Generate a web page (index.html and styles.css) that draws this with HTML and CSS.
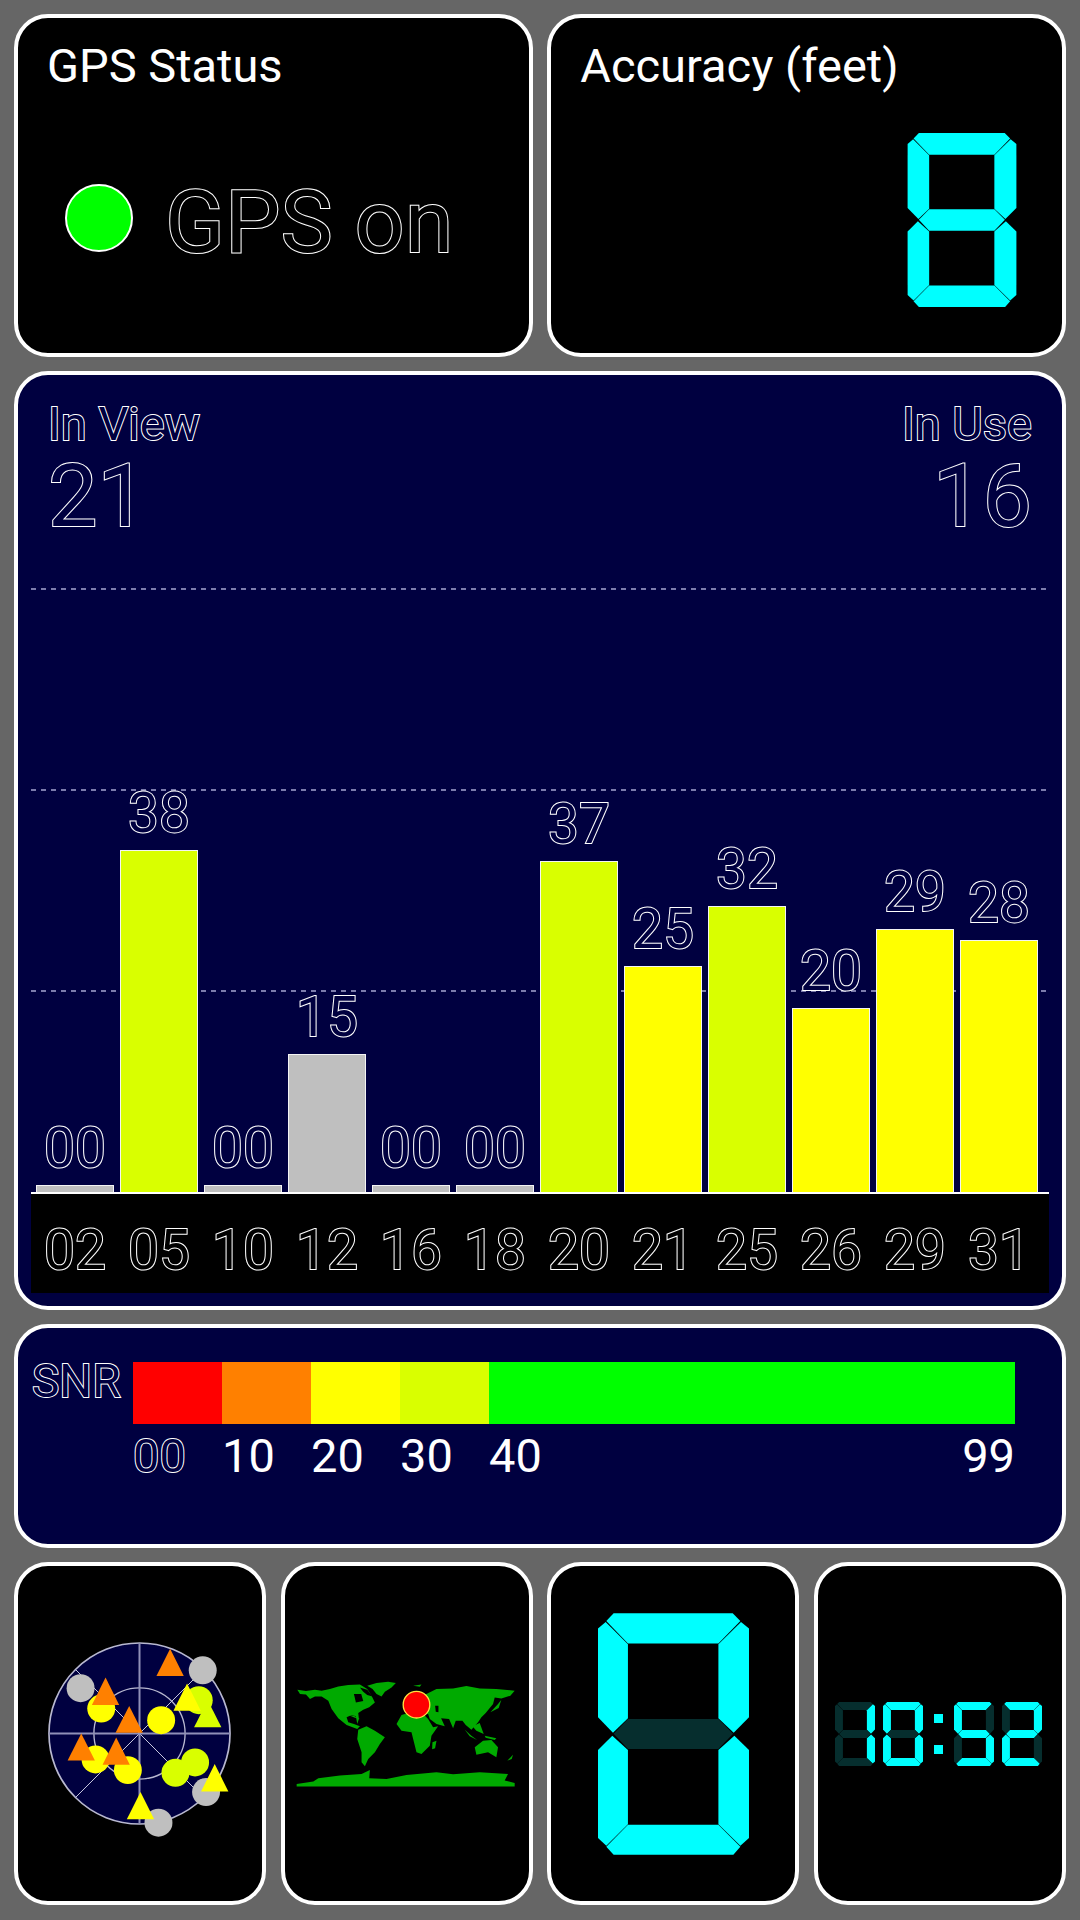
FILE: index.html
```html
<!DOCTYPE html>
<html lang="en">
<head>
    <meta charset="UTF-8">
    <meta name="viewport" content="width=device-width, initial-scale=1.0">
    <title>GPS Status</title>
    <link rel="stylesheet" href="styles.css">
</head>
<body>
    <!-- shared seven segment shapes -->
    <svg class="defs">
        <defs>
            <polygon id="seg-a" points="25,23 47,0 405,0 428,23 362,91 90,91"/>
            <polygon id="seg-f" points="0,46 23,26 90,93 90,316 45,359 0,313"/>
            <polygon id="seg-b" points="454,46 430,26 362,93 362,316 408,359 454,313"/>
            <polygon id="seg-g" points="47,362 90,318 362,318 406,362 362,408 90,408"/>
            <polygon id="seg-e" points="0,411 43,368 90,411 90,634 25,699 0,676"/>
            <polygon id="seg-c" points="454,411 410,368 362,411 362,634 428,699 454,676"/>
            <polygon id="seg-d" points="25,702 90,636 362,636 428,702 407,726 47,726"/>
        </defs>
    </svg>

    <div class="page">
        <div class="row-top">
            <div class="card status-card">
                <div class="title">GPS Status</div>
                <div class="status-row">
                    <span class="status-dot"></span>
                    <span class="outline status-text">GPS on</span>
                </div>
            </div>
            <div class="card accuracy-card">
                <div class="title">Accuracy (feet)</div>
                <svg class="seg accuracy-digit" viewBox="0 0 454 726">
                    <use href="#seg-a"/><use href="#seg-b"/><use href="#seg-c"/><use href="#seg-d"/><use href="#seg-e"/><use href="#seg-f"/><use href="#seg-g"/>
                </svg>
            </div>
        </div>

        <div class="card navy chart-card">
            <div class="chart-head">
                <div>
                    <div class="outline head-label">In View</div>
                    <div class="outline head-num">21</div>
                </div>
                <div class="head-right">
                    <div class="outline head-label">In Use</div>
                    <div class="outline head-num">16</div>
                </div>
            </div>
            <div class="plot">
                <div class="gridlines">
                    <div class="gridline"></div>
                    <div class="gridline"></div>
                    <div class="gridline"></div>
                </div>
                <div class="bars">
                    <div class="bar-col"><div class="outline bar-num">00</div><div class="bar grey" style="height:7px"></div></div>
                    <div class="bar-col"><div class="outline bar-num">38</div><div class="bar lime" style="height:342px"></div></div>
                    <div class="bar-col"><div class="outline bar-num">00</div><div class="bar grey" style="height:7px"></div></div>
                    <div class="bar-col"><div class="outline bar-num">15</div><div class="bar grey" style="height:138px"></div></div>
                    <div class="bar-col"><div class="outline bar-num">00</div><div class="bar grey" style="height:7px"></div></div>
                    <div class="bar-col"><div class="outline bar-num">00</div><div class="bar grey" style="height:7px"></div></div>
                    <div class="bar-col"><div class="outline bar-num">37</div><div class="bar lime" style="height:331px"></div></div>
                    <div class="bar-col"><div class="outline bar-num">25</div><div class="bar yellow" style="height:226px"></div></div>
                    <div class="bar-col"><div class="outline bar-num">32</div><div class="bar lime" style="height:286px"></div></div>
                    <div class="bar-col"><div class="outline bar-num">20</div><div class="bar yellow" style="height:184px"></div></div>
                    <div class="bar-col"><div class="outline bar-num">29</div><div class="bar yellow" style="height:263px"></div></div>
                    <div class="bar-col"><div class="outline bar-num">28</div><div class="bar yellow" style="height:252px"></div></div>
                </div>
            </div>
            <div class="ids">
                <div class="outline id">02</div>
                <div class="outline id">05</div>
                <div class="outline id">10</div>
                <div class="outline id">12</div>
                <div class="outline id">16</div>
                <div class="outline id">18</div>
                <div class="outline id">20</div>
                <div class="outline id">21</div>
                <div class="outline id">25</div>
                <div class="outline id">26</div>
                <div class="outline id">29</div>
                <div class="outline id">31</div>
            </div>
        </div>

        <div class="card navy snr-card">
            <div class="outline snr-label">SNR</div>
            <div class="snr-scale">
                <div class="snr-bar">
                    <div class="snr-step red"></div>
                    <div class="snr-step orange"></div>
                    <div class="snr-step yellow"></div>
                    <div class="snr-step lime"></div>
                    <div class="snr-rest green"></div>
                </div>
                <div class="snr-ticks">
                    <div class="snr-step outline">00</div>
                    <div class="snr-step">10</div>
                    <div class="snr-step">20</div>
                    <div class="snr-step">30</div>
                    <div class="snr-rest">
                        <span>40</span>
                        <span>99</span>
                    </div>
                </div>
            </div>
        </div>

        <div class="row-bottom">
            <div class="card tile">
                <svg class="radar" viewBox="40 80 640 640">
                    <circle class="radar-disc" cx="360" cy="400" r="272"/>
                    <circle class="radar-ring" cx="360" cy="400" r="137"/>
                    <line class="radar-thin" x1="168" y1="208" x2="552" y2="592"/>
                    <line class="radar-thin" x1="552" y1="208" x2="168" y2="592"/>
                    <line class="radar-axis" x1="360" y1="128" x2="360" y2="672"/>
                    <line class="radar-axis" x1="88" y1="400" x2="632" y2="400"/>

                    <circle class="sat-grey" cx="183" cy="264" r="42"/>
                    <circle class="sat-grey" cx="550" cy="210" r="42"/>
                    <circle class="sat-grey" cx="560" cy="576" r="42"/>
                    <circle class="sat-grey" cx="417" cy="668" r="42"/>
                    <circle class="sat-yellow" cx="245" cy="325" r="42"/>
                    <circle class="sat-yellow" cx="425" cy="360" r="42"/>
                    <circle class="sat-yellow" cx="228" cy="478" r="42"/>
                    <circle class="sat-yellow" cx="325" cy="510" r="42"/>
                    <circle class="sat-lime" cx="538" cy="300" r="42"/>
                    <circle class="sat-lime" cx="527" cy="487" r="42"/>
                    <circle class="sat-lime" cx="468" cy="518" r="42"/>

                    <polygon class="sat-lime" points="565,300 606,381 524,381"/>
                    <polygon class="sat-yellow" points="503,250 544,332 462,332"/>
                    <polygon class="sat-yellow" points="363,576 404,658 322,658"/>
                    <polygon class="sat-yellow" points="586,492 627,574 545,574"/>
                    <polygon class="sat-orange" points="452,145 493,227 411,227"/>
                    <polygon class="sat-orange" points="258,232 299,314 217,314"/>
                    <polygon class="sat-orange" points="329,317 370,398 288,398"/>
                    <polygon class="sat-orange" points="185,400 226,481 144,481"/>
                    <polygon class="sat-orange" points="290,412 331,494 249,494"/>
                </svg>
            </div>
            <div class="card tile">
                <svg class="map" viewBox="45 120 670 330">
                    <g class="land">
                        <!-- north america and arctic islands -->
                        <polygon points="52,152 60,165 78,166 90,180 105,172 125,172 145,185 155,210 175,238 200,258 232,270 240,262 222,255 205,250 200,235 215,228 228,232 232,255 237,240 235,222 250,212 268,205 285,190 275,170 262,150 240,136 205,138 175,142 150,150 125,155 105,152 78,156"/>
                        <!-- greenland -->
                        <polygon points="262,140 290,132 325,128 348,132 335,145 315,158 305,172 290,165 278,150"/>
                        <polygon points="205,228 222,230 240,240 225,236"/>
                        <!-- south america -->
                        <polygon points="235,272 260,262 285,275 315,295 300,315 285,340 265,360 255,382 245,370 245,340 232,300"/>
                        <!-- africa -->
                        <polygon points="350,255 365,228 385,222 430,225 445,240 460,265 475,262 455,290 450,320 425,345 410,340 400,300 395,280 365,275"/>
                        <!-- eurasia -->
                        <polygon points="375,218 370,190 400,165 440,165 470,150 520,148 560,141 600,148 650,150 705,155 692,170 665,178 645,175 640,195 618,222 605,235 595,250 575,272 558,258 548,245 528,245 520,268 508,240 484,238 495,262 470,255 450,240 445,225 420,225 395,215"/>
                        <polygon points="400,140 425,136 420,143"/>
                        <polygon points="458,310 470,305 466,328 457,331"/>
                        <!-- australia and islands -->
                        <polygon points="585,325 610,305 635,303 655,325 650,355 625,340 590,347"/>
                        <polygon points="555,272 575,290 592,303 570,292"/>
                        <polygon points="578,262 600,252 612,285 590,275"/>
                        <polygon points="615,290 650,298 645,303 618,296"/>
                        <polygon points="632,220 655,195 665,182 657,207"/>
                        <polygon points="683,365 700,347 696,360"/>
                        <!-- antarctica -->
                        <polygon points="50,435 100,428 115,418 180,410 245,405 270,393 268,418 320,420 380,408 470,400 520,406 600,400 685,405 675,425 705,432 705,443 50,443"/>
                    </g>
                    <g class="sea">
                        <polygon points="222,165 244,165 250,186 228,190"/>
                        <polygon points="240,145 262,152 278,172 262,168 250,158"/>
                        <polygon points="466,200 476,200 476,220 468,218"/>
                    </g>
                    <circle class="map-pin" cx="410" cy="197" r="40"/>
                </svg>
            </div>
            <div class="card tile">
                <svg class="seg big-digit" viewBox="0 0 454 726">
                    <use href="#seg-a"/><use href="#seg-b"/><use href="#seg-c"/><use href="#seg-d"/><use href="#seg-e"/><use href="#seg-f"/><use class="off" href="#seg-g"/>
                </svg>
            </div>
            <div class="card tile">
                <div class="clock">
                    <svg class="seg clock-digit" viewBox="0 0 454 726">
                        <use class="off" href="#seg-a"/><use href="#seg-b"/><use href="#seg-c"/><use class="off" href="#seg-d"/><use class="off" href="#seg-e"/><use class="off" href="#seg-f"/><use class="off" href="#seg-g"/>
                    </svg>
                    <svg class="seg clock-digit" viewBox="0 0 454 726">
                        <use href="#seg-a"/><use href="#seg-b"/><use href="#seg-c"/><use href="#seg-d"/><use href="#seg-e"/><use href="#seg-f"/><use class="off" href="#seg-g"/>
                    </svg>
                    <div class="colon"><span></span><span></span></div>
                    <svg class="seg clock-digit" viewBox="0 0 454 726">
                        <use href="#seg-a"/><use class="off" href="#seg-b"/><use href="#seg-c"/><use href="#seg-d"/><use class="off" href="#seg-e"/><use href="#seg-f"/><use href="#seg-g"/>
                    </svg>
                    <svg class="seg clock-digit" viewBox="0 0 454 726">
                        <use href="#seg-a"/><use href="#seg-b"/><use class="off" href="#seg-c"/><use href="#seg-d"/><use href="#seg-e"/><use class="off" href="#seg-f"/><use href="#seg-g"/>
                    </svg>
                </div>
            </div>
        </div>
    </div>
</body>
</html>
```

FILE: styles.css
```css
body {
    margin: 0;
    background-color: #666666;
    color: white;
    font-family: Roboto, "Liberation Sans", sans-serif;
}
.defs {
    display: none;
}
.page {
    display: flex;
    flex-direction: column;
    gap: 14.5px;
    padding: 14px 14px 0;
}
.card {
    box-sizing: border-box;
    background: black;
    border: 4px solid white;
    border-radius: 34px;
}
.navy {
    background: #000040;
}
/* hollow text: the fill is painted over the inner half of the stroke */
.outline {
    color: black;
    -webkit-text-stroke: 2px #ffffff;
    paint-order: stroke fill;
}
.navy .outline {
    color: #000040;
}
.navy .ids .outline {
    color: black;
}
.title {
    font-size: 47px;
    line-height: 46px;
}

/* top row */
.row-top {
    display: grid;
    grid-template-columns: 1fr 1fr;
    gap: 14.5px;
    height: 342.5px;
}
.status-card {
    padding: 25px 29px;
}
.status-row {
    display: flex;
    align-items: flex-start;
    gap: 32px;
    margin: 85px 0 0 18px;
}
.status-dot {
    box-sizing: border-box;
    width: 68px;
    height: 68px;
    margin-top: 10px;
    background: #00ff00;
    border: 2px solid #ffffff;
    border-radius: 50%;
}
.status-text {
    font-size: 88px;
    line-height: 90px;
    margin-top: 3px;
}
.accuracy-card {
    display: flex;
    flex-direction: column;
    padding: 25px 44px 0 29px;
}
.accuracy-digit {
    align-self: flex-end;
    width: 112px;
    height: 174px;
    margin-top: 44px;
}

/* seven segment digits */
.seg {
    fill: #00ffff;
}
.seg .off {
    fill: #062e2e;
}

/* bar chart */
.chart-card {
    height: 938.5px;
    padding: 26px 13px 0;
}
.chart-head {
    display: flex;
    justify-content: space-between;
    height: 187px;
    padding: 0 17px 0 17px;
}
.head-right {
    text-align: right;
}
.head-label {
    font-size: 47px;
    line-height: 46px;
}
.head-num {
    font-size: 88px;
    line-height: 90px;
    margin-top: 4px;
}
.plot {
    display: grid;
    height: 604px;
}
.gridlines, .bars {
    grid-area: 1 / 1;
}
.gridline {
    height: 2px;
    margin-bottom: 199px;
    background: repeating-linear-gradient(90deg, #7c7cac 0 5px, transparent 5px 10px);
}
.bars {
    display: flex;
    align-items: flex-end;
    gap: 6px;
    padding-left: 5px;
    border-bottom: 2px solid white;
    margin-bottom: -2px;
}
.bar-col {
    width: 78px;
    text-align: center;
}
.bar-num {
    font-size: 55px;
    line-height: 56px;
    margin-bottom: 9px;
}
.bar {
    box-sizing: border-box;
    border: 1px solid #f4f4f4;
    border-bottom: none;
}
.grey {
    background: #bfbfbf;
}
.lime {
    background: #d9ff00;
}
.yellow {
    background: #ffff00;
}
.orange {
    background: #ff8000;
}
.red {
    background: #ff0000;
}
.green {
    background: #00ff00;
}
.ids {
    display: flex;
    gap: 6px;
    height: 99px;
    padding: 28px 0 0 5px;
    margin-top: 2px;
    box-sizing: border-box;
    background: black;
}
.id {
    width: 78px;
    text-align: center;
    font-size: 55px;
    line-height: 56px;
}

/* snr legend */
.snr-card {
    display: flex;
    height: 223.5px;
    padding: 34px 0 0 14px;
}
.snr-label {
    width: 101px;
    font-size: 46px;
    line-height: 46px;
    margin-top: -4px;
}
.snr-scale {
    width: 882px;
}
.snr-bar, .snr-ticks {
    display: flex;
}
.snr-bar {
    height: 62px;
}
.snr-ticks {
    margin-top: 9px;
    font-size: 47px;
    line-height: 46px;
}
.snr-step {
    width: 89px;
}
.snr-rest {
    flex: 1;
    display: flex;
    justify-content: space-between;
}

/* bottom tiles */
.row-bottom {
    display: grid;
    grid-template-columns: repeat(4, 1fr);
    gap: 14.5px;
    height: 343px;
}
.tile {
    display: flex;
    align-items: center;
    justify-content: center;
}
.radar {
    width: 213px;
    height: 213px;
    margin-right: 2px;
}
.radar-disc {
    fill: #000040;
    stroke: #b8b8d0;
    stroke-width: 5;
}
.radar-ring {
    fill: none;
    stroke: #b8b8d0;
    stroke-width: 4;
}
.radar-thin {
    stroke: #c8c8e0;
    stroke-width: 3;
}
.radar-axis {
    stroke: #9090b8;
    stroke-width: 6;
}
.sat-grey {
    fill: #bfbfbf;
}
.sat-yellow {
    fill: #ffff00;
}
.sat-lime {
    fill: #d9ff00;
}
.sat-orange {
    fill: #ff8000;
}
.map {
    width: 223px;
    height: 110px;
}
.land {
    fill: #00aa00;
}
.sea {
    fill: black;
}
.map-pin {
    fill: #ff0000;
    stroke: #ffe040;
    stroke-width: 4;
}
.big-digit {
    width: 151px;
    height: 242px;
}
.clock {
    display: flex;
    align-items: center;
    gap: 8px;
    margin-left: -2px;
}
.clock-digit {
    width: 40px;
    height: 64px;
}
.colon {
    display: flex;
    flex-direction: column;
    gap: 22px;
    margin: 0 3px;
}
.colon span {
    width: 9px;
    height: 9px;
    background: #00ffff;
}
```
